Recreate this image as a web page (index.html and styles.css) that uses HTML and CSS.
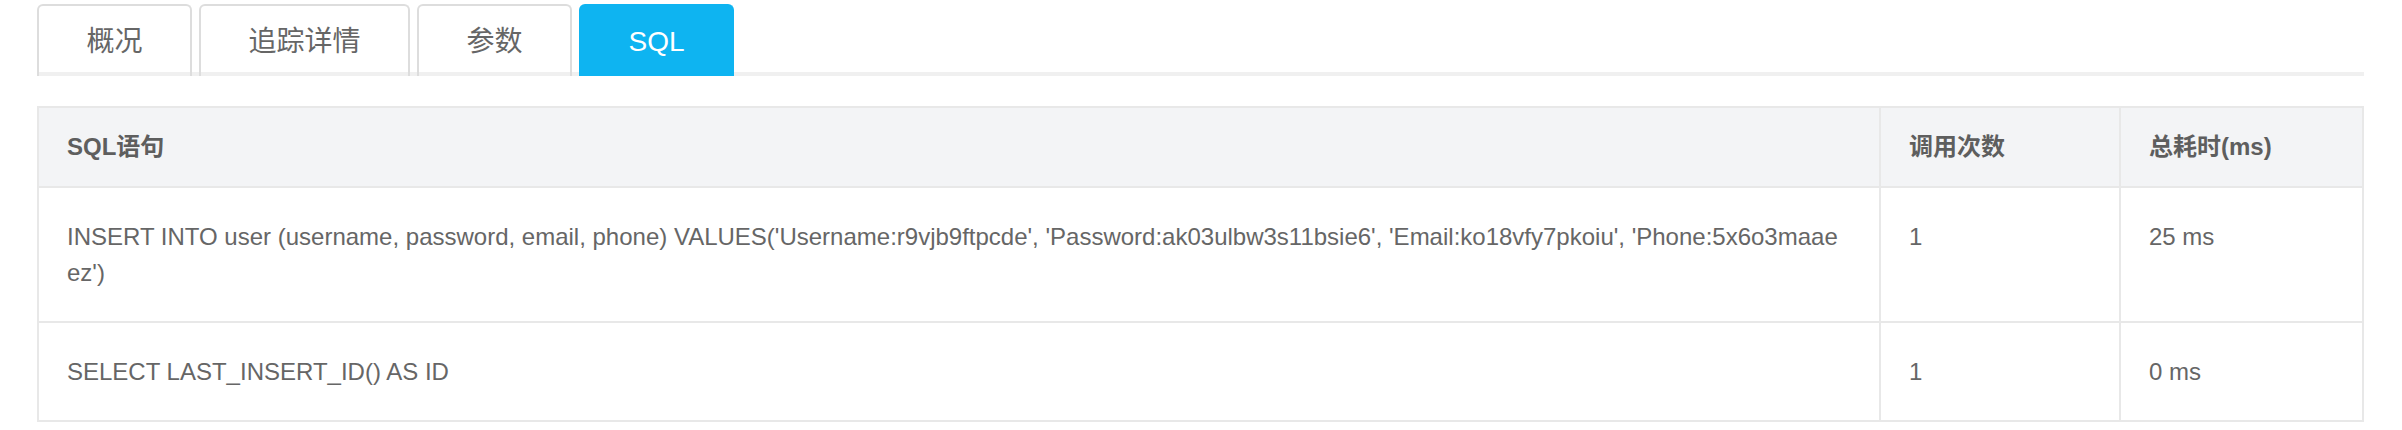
FILE: index.html
```html
<!DOCTYPE html>
<html lang="zh">
<head>
<meta charset="utf-8">
<title>SQL</title>
<link rel="stylesheet" href="styles.css">
</head>
<body>
<div class="page">
  <div class="tabs">
    <div class="tab">概况</div>
    <div class="tab">追踪详情</div>
    <div class="tab">参数</div>
    <div class="tab active">SQL</div>
  </div>
  <table class="sql-table">
    <colgroup>
      <col class="c-sql">
      <col class="c-count">
      <col class="c-time">
    </colgroup>
    <thead>
      <tr>
        <th>SQL语句</th>
        <th>调用次数</th>
        <th>总耗时(ms)</th>
      </tr>
    </thead>
    <tbody>
      <tr>
        <td>INSERT INTO user (username, password, email, phone) VALUES('Username:r9vjb9ftpcde', 'Password:ak03ulbw3s11bsie6', 'Email:ko18vfy7pkoiu', 'Phone:5x6o3maaeez')</td>
        <td>1</td>
        <td>25 ms</td>
      </tr>
      <tr>
        <td>SELECT LAST_INSERT_ID() AS ID</td>
        <td>1</td>
        <td>0 ms</td>
      </tr>
    </tbody>
  </table>
</div>
</body>
</html>
```
FILE: styles.css
```css
html, body {
  margin: 0;
  padding: 0;
  background: #ffffff;
}

body {
  font-family: "Liberation Sans", Arial, "Noto Sans CJK SC", sans-serif;
  color: #666666;
}

.page {
  padding: 4px 38px 0 37px;
}

.tabs {
  display: flex;
  gap: 7px;
  border-bottom: 4px solid #f0f0f0;
}

.tab {
  margin-bottom: -4px;
  padding: 0 47.5px;
  height: 70px;
  line-height: 72px;
  font-size: 28px;
  color: #666666;
  border: 2px solid #dddddd;
  border-bottom: 0;
  border-radius: 6px 6px 0 0;
  background: transparent;
}

.tab.active {
  background: #0eb4f1;
  border-color: #0eb4f1;
  color: #ffffff;
}

.sql-table {
  margin-top: 30px;
  width: 100%;
  table-layout: fixed;
  border-collapse: collapse;
  font-size: 24px;
  line-height: 36px;
}

.c-count { width: 240px; }
.c-time { width: 243px; }

.sql-table th,
.sql-table td {
  border: 2px solid #e8e8e8;
  text-align: left;
  vertical-align: top;
  padding: 31px 28px 30px;
  word-break: break-all;
}

.sql-table th {
  background: #f3f4f6;
  font-weight: bold;
  color: #5e5e5e;
  padding-top: 21px;
  padding-bottom: 21px;
}
```
